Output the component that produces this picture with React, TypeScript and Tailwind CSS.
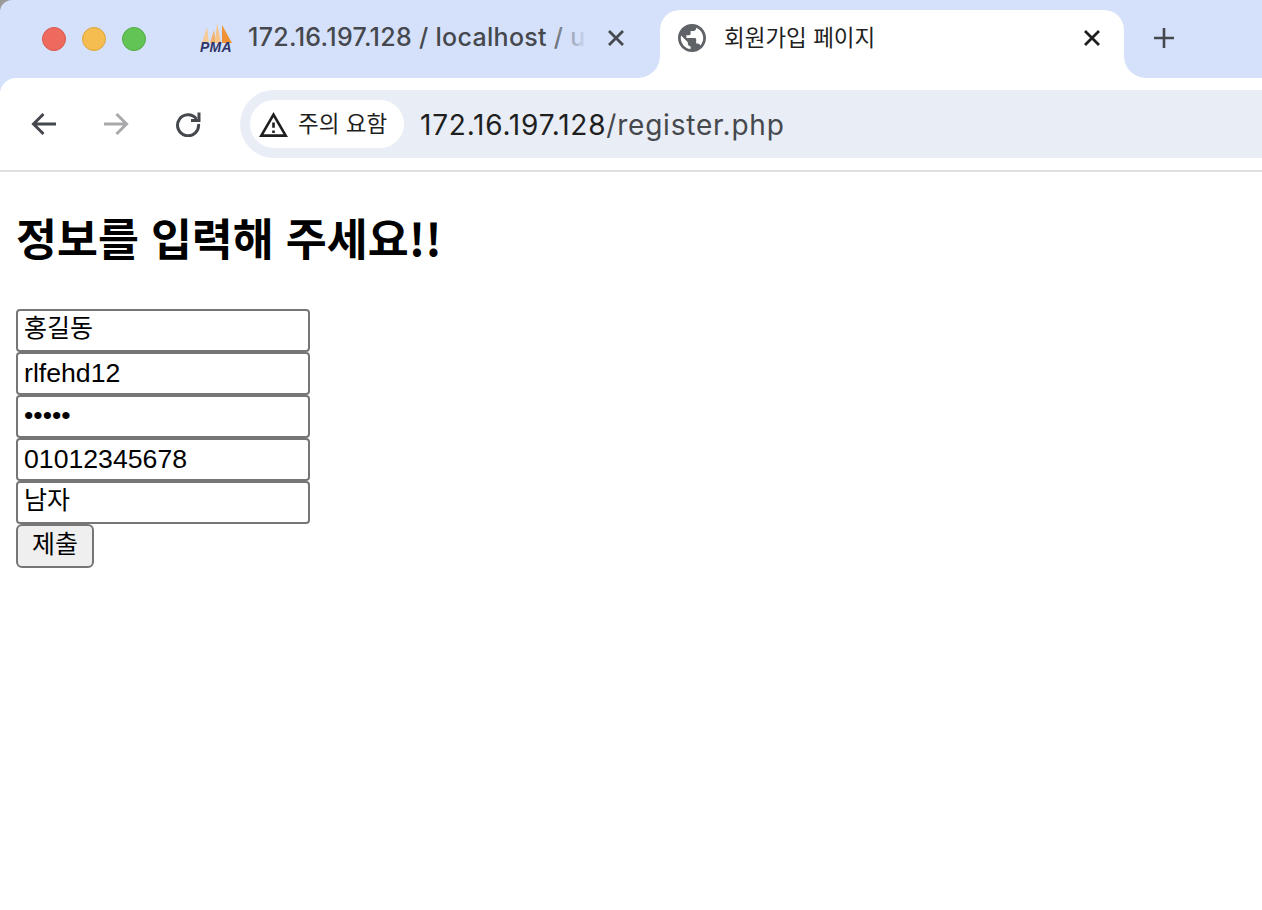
const uiFont = "font-['Inter','Noto_Sans_CJK_KR',sans-serif]";

const TrafficLight = ({ className }: { className: string }) => (
  <span className={`h-6 w-6 rounded-full border ${className}`} />
);

const PmaLogo = () => (
  <span className="relative mb-[2px] block h-[32px] w-[34px] shrink-0">
    <svg viewBox="0 0 34 32" className="absolute left-0 top-0 h-[32px] w-[34px]">
      <path d="M7 5 L9 21 L2 21 Z" fill="#f7cb96" />
      <path d="M14 8 L16 21 L10 21 Z" fill="#f4b26a" />
      <path d="M17 1 L21 21 L15 21 Z" fill="#f7c58a" />
      <path d="M22 3 L32 21 L22 21 Z" fill="#ee9235" />
    </svg>
    <span className="absolute bottom-0 left-0 font-['Liberation_Sans',sans-serif] text-[14px] font-bold italic leading-[14px] tracking-[0.2px] text-[#2f3568]">
      PMA
    </span>
  </span>
);

const CloseIcon = ({ color }: { color: string }) => (
  <svg viewBox="0 0 16 16" className="h-4 w-4" fill="none" stroke={color} strokeWidth="2.8">
    <path d="M1 1 L15 15 M15 1 L1 15" />
  </svg>
);

const BrowserChrome = () => (
  <header className={uiFont}>
    {/* tab strip */}
    <div className="flex h-[78px] bg-gradient-to-b from-[#9a9a9a] from-50% to-[#ffffff] to-50%">
      <div className="flex w-[660px] items-center rounded-br-[22px] rounded-tl-[12px] bg-[#d5e1fb] pl-[42px]">
        <div className="flex gap-4">
          <TrafficLight className="border-[#d9574c] bg-[#ee6a5f]" />
          <TrafficLight className="border-[#dca53e] bg-[#f5bd4f]" />
          <TrafficLight className="border-[#52ab46] bg-[#61c454]" />
        </div>
        <div className="ml-[54px]">
          <PmaLogo />
        </div>
        <div className="relative mb-[2px] ml-[14px] w-[340px] whitespace-nowrap text-[25px] font-medium tracking-[0.3px] text-[#45484d]">
          172.16.197.128 / localhost / u
          <span className="absolute bottom-0 right-0 top-0 w-[44px] bg-gradient-to-r from-[#d5e1fb]/0 to-[#d5e1fb]" />
        </div>
        <div className="mb-[2px] ml-[20px]">
          <CloseIcon color="#45484d" />
        </div>
      </div>
      <div className="w-[464px] bg-[#d5e1fb] pt-[10px]">
        <div className="flex h-[68px] items-center rounded-t-[20px] bg-[#ffffff] pb-[12px] pl-[18px] pr-[24px]">
          <svg viewBox="2 2 20 20" className="h-[28px] w-[28px]" fill="#5f6368">
            <path d="M12 2C6.48 2 2 6.48 2 12s4.48 10 10 10 10-4.48 10-10S17.52 2 12 2zm-1 17.93c-3.95-.49-7-3.85-7-7.93 0-.62.08-1.21.21-1.79L9 15v1c0 1.1.9 2 2 2v1.93zm6.9-2.54c-.26-.81-1-1.39-1.9-1.39h-1v-3c0-.55-.45-1-1-1H8v-2h2c.55 0 1-.45 1-1V7h2c1.1 0 2-.9 2-2v-.41c2.93 1.19 5 4.06 5 7.41 0 2.08-.8 3.97-2.1 5.39z" />
          </svg>
          <span className="ml-[18px] flex-1 text-[22.5px] text-[#1f1f1f]">회원가입 페이지</span>
          <CloseIcon color="#1f1f1f" />
        </div>
      </div>
      <div className="flex flex-1 items-center rounded-bl-[22px] bg-[#d5e1fb] pb-[2px] pl-[30px]">
        <svg viewBox="0 0 20 20" className="h-5 w-5" fill="none" stroke="#45484d" strokeWidth="2.6">
          <path d="M10 0 V20 M0 10 H20" />
        </svg>
      </div>
    </div>

    {/* toolbar */}
    <div className="bg-[#d5e1fb]">
      <div className="flex h-[92px] items-center rounded-tl-[16px] bg-[#ffffff] pl-[31px]">
        <svg viewBox="0 0 26 24" className="h-6 w-[26px]" fill="none" stroke="#45484d" strokeWidth="3">
          <path d="M25 12 H3 M12.5 2 L2.5 12 L12.5 22" />
        </svg>
        <svg viewBox="0 0 26 24" className="ml-[46px] h-6 w-[26px]" fill="none" stroke="#a9a9ab" strokeWidth="3">
          <path d="M1 12 H23 M13.5 2 L23.5 12 L13.5 22" />
        </svg>
        <svg viewBox="0 0 26 26" className="ml-[46px] h-[26px] w-[26px]" fill="none" stroke="#45484d" strokeWidth="3">
          <path d="M21.5 8 A10.5 10.5 0 1 0 23.5 13" />
          <path d="M24 1.5 V9.5 H16" />
        </svg>
        <div className="ml-[39px] flex h-[68px] flex-1 items-center rounded-l-[34px] bg-[#e9edf6] pl-[10px]">
          <div className="flex h-[48px] w-[154px] items-center rounded-full bg-[#ffffff] pl-[9px]">
            <svg viewBox="1 2 22 19" className="h-[25px] w-[29px]" fill="#1f1f1f">
              <path d="M12 5.99L19.53 19H4.47L12 5.99M12 2L1 21h22L12 2zm1 14h-2v2h2v-2zm0-6h-2v4h2v-4z" />
            </svg>
            <span className="ml-[10px] whitespace-nowrap text-[22.5px] text-[#1f1f1f]">주의 요함</span>
          </div>
          <div className="ml-[16px] whitespace-nowrap pt-[2px] text-[28px] tracking-[0.78px] text-[#45484d]">
            <span className="text-[#1f1f1f]">172.16.197.128</span>/register.php
          </div>
        </div>
      </div>
    </div>
    <div className="h-[2px] bg-[#e0e0e0]" />
  </header>
);

const fieldClass =
  "block h-[43px] w-[294px] rounded-[4px] border-2 border-[#767676] bg-[#ffffff] px-[6px] font-['Liberation_Sans','Noto_Sans_CJK_KR',sans-serif] leading-[30px] text-[#000000]";

export default function App() {
  return (
    <div className="min-h-[910px] bg-[#ffffff]">
      <BrowserChrome />
      <main className="px-4">
        <h1 className="pt-[35px] font-['Noto_Sans_CJK_KR',sans-serif] text-[44.5px] font-bold leading-[60px] text-[#000000] [word-spacing:2px]">
          정보를 입력해 주세요!!
        </h1>
        <form className="mt-[42px]">
          <input className={`${fieldClass} pb-[9px] text-[25px]`} defaultValue="홍길동" />
          <input className={`${fieldClass} text-[26.67px]`} defaultValue="rlfehd12" />
          <input className={`${fieldClass} pb-[2px] text-[26.67px]`} type="password" defaultValue="12345" />
          <input className={`${fieldClass} text-[26.67px]`} defaultValue="01012345678" />
          <input className={`${fieldClass} pb-[9px] text-[25px]`} defaultValue="남자" />
          <button
            type="button"
            className="block h-[44px] w-[78px] rounded-[6px] border-2 border-[#767676] bg-[#efefef] pb-[4px] font-['Liberation_Sans','Noto_Sans_CJK_KR',sans-serif] text-[25px] leading-[30px] text-[#000000]"
          >
            제출
          </button>
        </form>
      </main>
    </div>
  );
}
